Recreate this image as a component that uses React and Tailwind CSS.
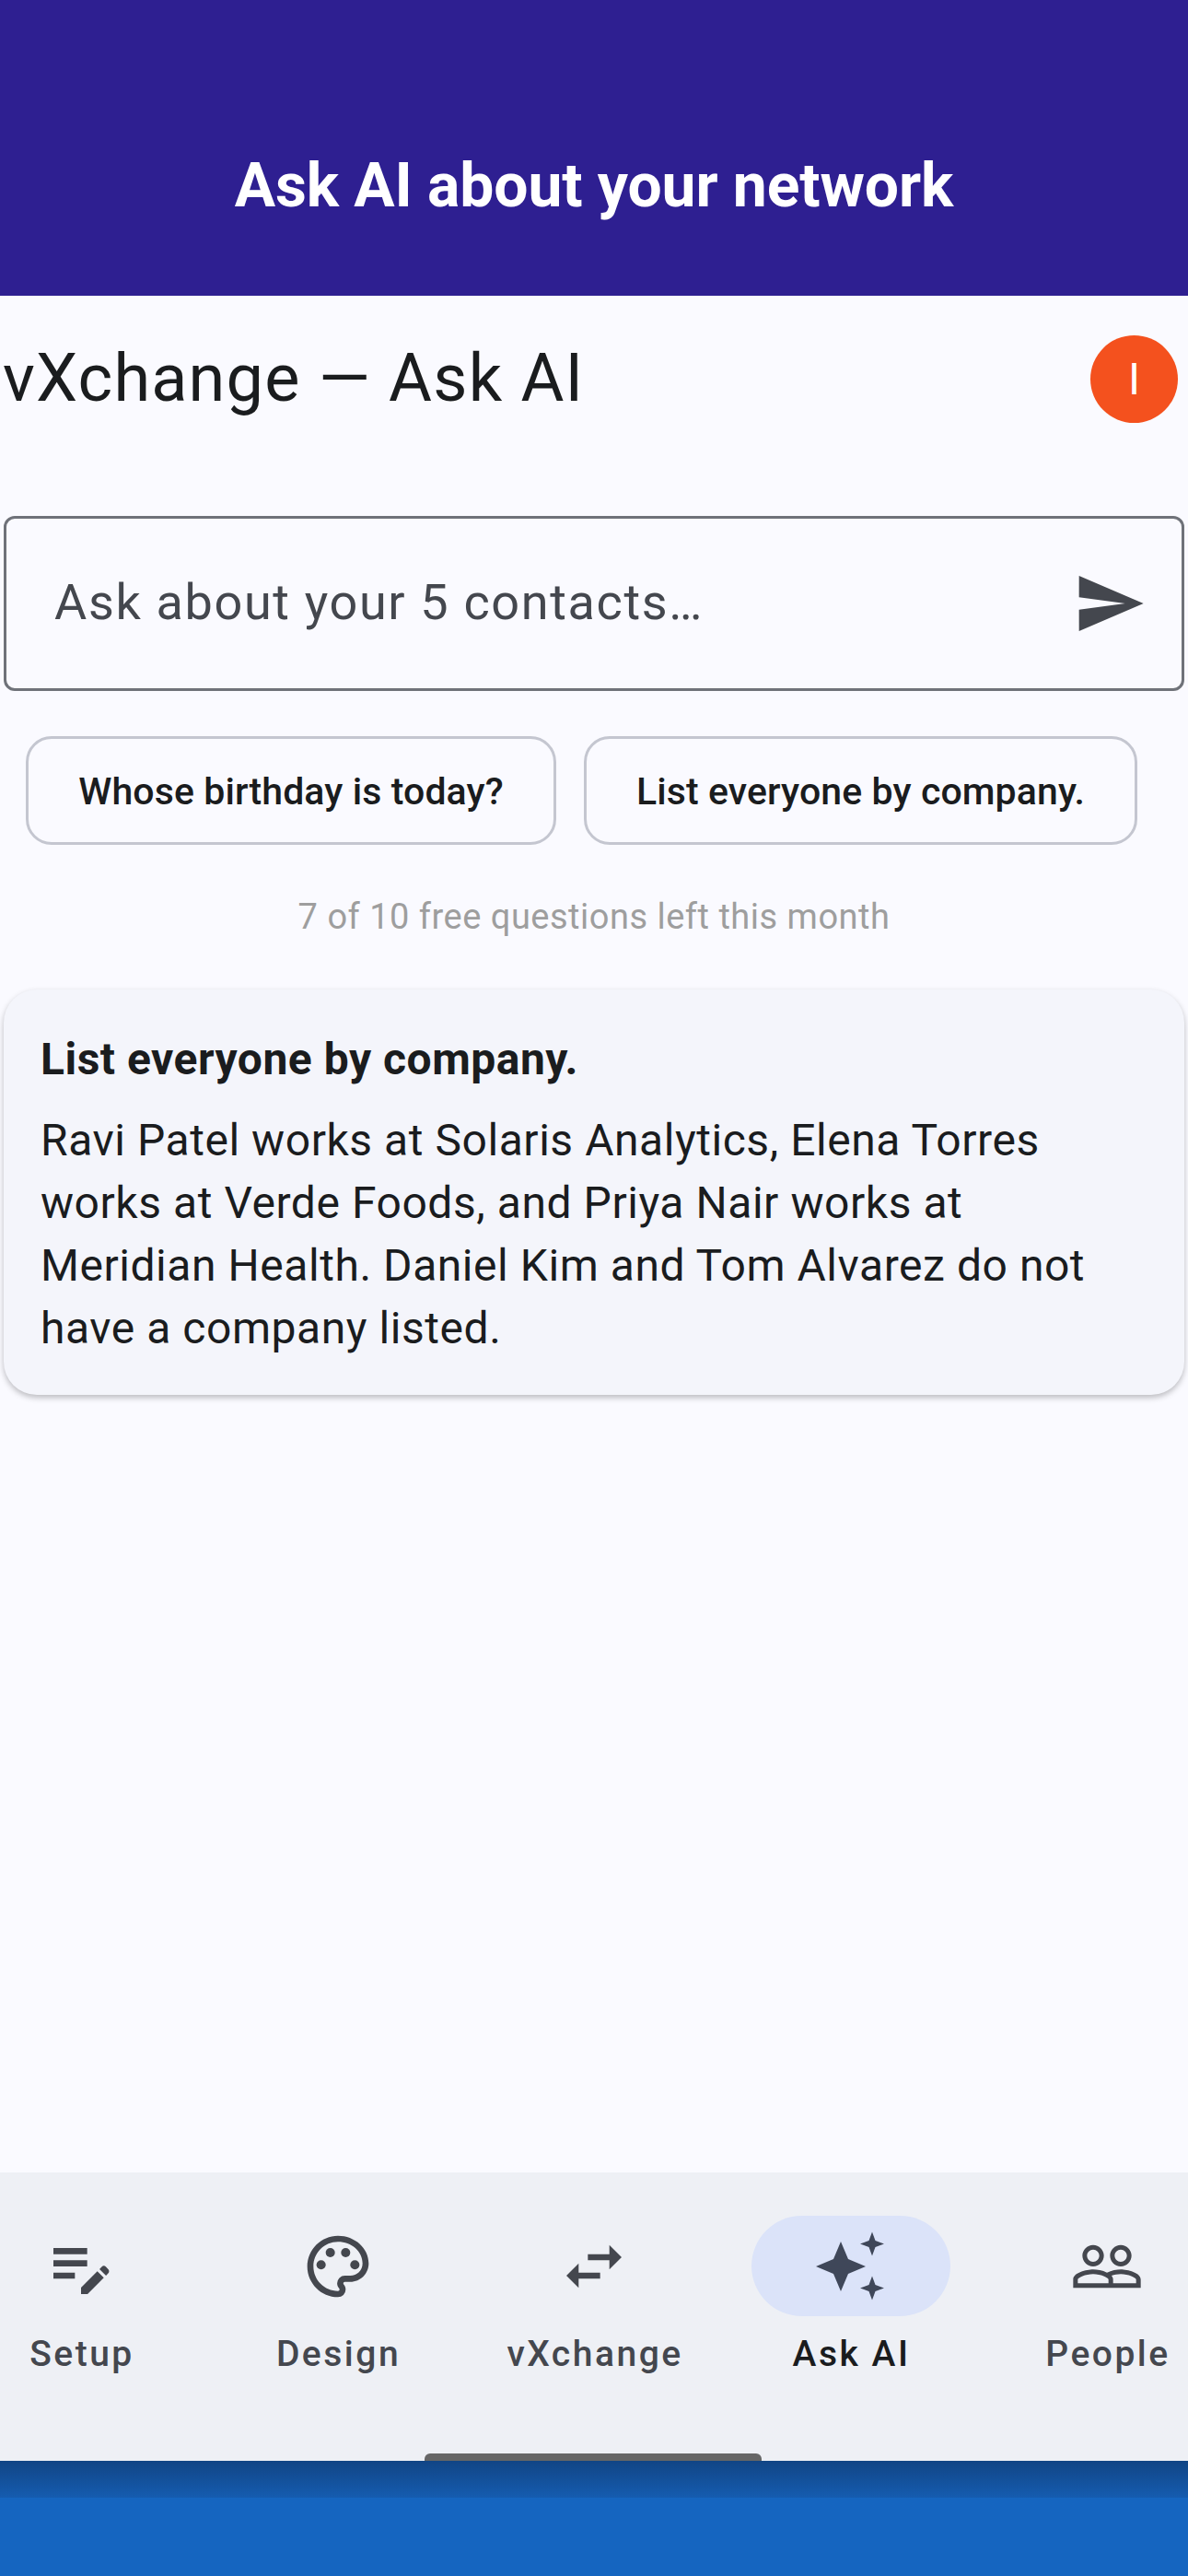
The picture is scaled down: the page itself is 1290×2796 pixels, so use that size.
import { MdEditNote, MdOutlinePalette, MdSwapHoriz, MdPeopleOutline, MdSend } from "react-icons/md";

function Sparkles({ className }) {
  return (
    <svg viewBox="0 0 80 80" className={className} fill="currentColor" aria-hidden>
      <path d="M29 13 L37 32 L56 40 L37 48 L29 67 L21 48 L2 40 L21 32 Z" />
      <path d="M63 2.5 L66.5 12 L76 15.5 L66.5 19 L63 28.5 L59.5 19 L50 15.5 L59.5 12 Z" />
      <path d="M63 50.5 L66.5 60 L76 63.5 L66.5 67 L63 76.5 L59.5 67 L50 63.5 L59.5 60 Z" />
    </svg>
  );
}

const iconSize = "h-[80px] w-[80px]";

const tabs = [
  { label: "Setup", icon: <MdEditNote className={iconSize} /> },
  { label: "Design", icon: <MdOutlinePalette className={iconSize} /> },
  { label: "vXchange", icon: <MdSwapHoriz className={iconSize} /> },
  { label: "Ask AI", icon: <Sparkles className={iconSize} />, active: true },
  { label: "People", icon: <MdPeopleOutline className={iconSize} /> },
];

export default function App() {
  return (
    <div className="flex h-[2796px] w-[1290px] flex-col overflow-hidden bg-[#fafaff] font-['Roboto',sans-serif] text-[#1a1c1e]">
      <header className="flex h-[321px] shrink-0 items-end justify-center bg-[#2e1f91] pb-[77px]">
        <h1 className="text-[66px] font-bold leading-[84px] tracking-[-0.1px] text-white">Ask AI about your network</h1>
      </header>

      <main className="flex flex-1 flex-col px-1">
        <div className="flex h-[190px] items-start justify-between pt-[43px]">
          <h2 className="-ml-[1px] text-[72px] font-normal leading-[94px] tracking-[1.2px]">vXchange — Ask AI</h2>
          <div className="mr-[7px] flex h-[95px] w-[95px] items-center justify-center rounded-full bg-[#f4511e] text-[48px] text-white">
            I
          </div>
        </div>

        <div className="mt-[49px] flex h-[190px] items-center justify-between rounded-[12px] border-[3px] border-[#6f7279] pl-[52px] pr-[38px]">
          <span className="pb-[3px] text-[54px] tracking-[1.65px] text-[#44474e]">Ask about your 5 contacts…</span>
          <MdSend className="h-[80px] w-[80px] text-[#44474e]" />
        </div>

        <div className="mt-[49px] flex gap-[30px] pl-[24px]">
          <button className="flex h-[118px] w-[576px] items-center justify-center rounded-[28px] border-[3px] border-[#c4c6d0] pt-[3px] text-[41px] font-medium tracking-[0.1px]">
            Whose birthday is today?
          </button>
          <button className="flex h-[118px] w-[601px] items-center justify-center rounded-[28px] border-[3px] border-[#c4c6d0] pt-[3px] text-[41px] font-medium tracking-[0.1px]">
            List everyone by company.
          </button>
        </div>

        <p className="mt-[52px] text-center text-[38px] leading-[52px] tracking-[0.5px] text-[#9e9e9e]">
          7 of 10 free questions left this month
        </p>

        <section className="mt-[53px] rounded-[36px] bg-[#f4f5fb] px-[40px] pb-[38px] pt-[45px] shadow-[0_3px_6px_rgba(0,0,0,0.25)]">
          <h3 className="text-[48px] font-bold leading-[62px] tracking-[0.5px]">List everyone by company.</h3>
          <p className="mt-[23px] text-[48px] leading-[68px] tracking-[0.55px]">
            Ravi Patel works at Solaris Analytics, Elena Torres works at Verde Foods, and Priya Nair works at Meridian
            Health. Daniel Kim and Tom Alvarez do not have a company listed.
          </p>
        </section>
      </main>

      <nav className="relative flex h-[313px] shrink-0 items-start justify-between bg-[#eef0f5] pt-[47px] text-[#44474e]">
        {tabs.map((tab) => (
          <div key={tab.label} className="flex w-[176px] flex-col items-center">
            <div
              className={
                tab.active
                  ? "flex h-[109px] w-[216px] shrink-0 items-center justify-center rounded-full bg-[#dbe3f9] text-[#3f4759]"
                  : "flex h-[109px] w-[216px] shrink-0 items-center justify-center rounded-full"
              }
            >
              {tab.icon}
            </div>
            <span
              className={
                tab.active
                  ? "mt-[14px] pl-[2px] text-[39px] font-medium leading-[54px] tracking-[2.5px] text-[#1a1c1e]"
                  : "mt-[14px] pl-[2px] text-[39px] font-medium leading-[54px] tracking-[2.5px]"
              }
            >
              {tab.label}
            </span>
          </div>
        ))}
        <div className="absolute bottom-0 left-[461px] h-[8px] w-[366px] rounded-t-[6px] bg-[#666666]" />
      </nav>

      <div className="h-[125px] shrink-0 bg-[#1565c0]">
        <div className="h-[40px] bg-gradient-to-b from-[#114585] to-[#155cb0]" />
      </div>
    </div>
  );
}
